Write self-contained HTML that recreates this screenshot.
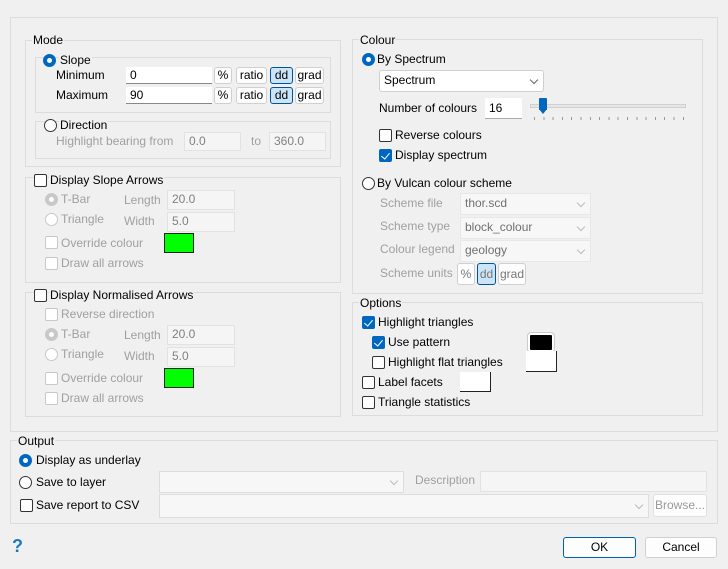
<!DOCTYPE html><html><head><style>
body{margin:0;width:728px;height:569px;background:#f0f0f0;font-family:"Liberation Sans",sans-serif;font-size:12px;color:#000;position:relative;overflow:hidden}
div,span{position:absolute;box-sizing:border-box}
.g{border:1px solid #dcdcdc}
.t{line-height:14px;white-space:nowrap;background:#f0f0f0;padding:0 1px}
.d{color:#a0a0a0}
.cb{width:13px;height:13px;border:1px solid #333;border-radius:2px;background:#fff}
.cb.dis{border-color:#c8c8c8}
.cb.on{background:#0067c0;border-color:#0067c0}
.cb.on:after{content:"";position:absolute;left:3px;top:1px;width:4px;height:7px;border:solid #fff;border-width:0 1.3px 1.3px 0;transform:rotate(40deg)}
.rb{width:13px;height:13px;border:1px solid #333;border-radius:50%;background:#fff}
.rb.on{background:#0067c0;border-color:#0067c0}
.rb.on:after{content:"";position:absolute;left:3px;top:3px;width:5px;height:5px;border-radius:50%;background:#fff}
.rb.dis{border-color:#c8c8c8}
.rb.dison{border:4px solid #c8c8c8}
.in{background:#fff;border-bottom:1px solid #888;line-height:16px;padding-left:4px}
.ind{background:#f5f5f5;border:1px solid #e2e2e2;color:#808080;line-height:17px;padding-left:4px}
.bt{background:#fdfdfd;border:1px solid #d0d0d0;border-radius:3px;text-align:center;line-height:15px}
.bt.sel{background:#cce4f7;border-color:#005499}
.cmb{background:#fff;border:1px solid #d0d0d0;border-radius:3px;line-height:19px;padding-left:4px}
.cmbd{background:#f7f7f7;border:1px solid #e8e8e8;color:#707070;line-height:19px;padding-left:4px}
.ar{right:6px;top:6px;width:6px;height:6px;border:solid #666;border-width:0 1px 1px 0;transform:rotate(45deg)}
.arl{border-color:#bbb}
</style></head><body>
<div class="g" style="left:10px;top:17px;width:708px;height:415px"></div>

<!-- Mode -->
<div class="g" style="left:25px;top:40px;width:316px;height:127px"></div>
<span class="t" style="left:32px;top:33px">Mode</span>
<div class="g" style="left:35px;top:57px;width:296px;height:56px"></div>
<div class="rb on" style="left:43px;top:54px"></div><span class="t" style="left:59px;top:53px">Slope</span>
<span class="t" style="left:55px;top:68px;background:none">Minimum</span>
<div class="in" style="left:126px;top:67px;width:86px;height:17px">0</div>
<div class="bt" style="left:214px;top:67px;width:18px;height:17px">%</div>
<div class="bt" style="left:236px;top:67px;width:31px;height:17px">ratio</div>
<div class="bt sel" style="left:270px;top:67px;width:23px;height:17px">dd</div>
<div class="bt" style="left:295px;top:67px;width:29px;height:17px">grad</div>
<span class="t" style="left:55px;top:88px;background:none">Maximum</span>
<div class="in" style="left:126px;top:87px;width:86px;height:17px">90</div>
<div class="bt" style="left:214px;top:87px;width:18px;height:17px">%</div>
<div class="bt" style="left:236px;top:87px;width:31px;height:17px">ratio</div>
<div class="bt sel" style="left:270px;top:87px;width:23px;height:17px">dd</div>
<div class="bt" style="left:295px;top:87px;width:29px;height:17px">grad</div>
<div class="g" style="left:35px;top:121px;width:296px;height:38px"></div>
<div class="rb" style="left:44px;top:119px"></div><span class="t" style="left:59px;top:118px">Direction</span>
<span class="t d" style="left:55px;top:134px;background:none">Highlight bearing from</span>
<div class="ind" style="left:184px;top:132px;width:57px;height:19px">0.0</div>
<span class="t d" style="left:250px;top:134px;background:none">to</span>
<div class="ind" style="left:269px;top:132px;width:57px;height:19px">360.0</div>

<!-- Slope arrows -->
<div class="g" style="left:25px;top:177px;width:316px;height:106px"></div>
<div class="cb" style="left:34px;top:174px"></div><span class="t" style="left:49px;top:173px">Display Slope Arrows</span>
<div class="rb dison" style="left:45px;top:193px"></div><span class="t d" style="left:60px;top:192px;background:none">T-Bar</span>
<span class="t d" style="left:123px;top:193px;background:none">Length</span>
<div class="ind" style="left:167px;top:190px;width:68px;height:20px">20.0</div>
<div class="rb dis" style="left:45px;top:213px"></div><span class="t d" style="left:60px;top:212px;background:none">Triangle</span>
<span class="t d" style="left:123px;top:214px;background:none">Width</span>
<div class="ind" style="left:167px;top:212px;width:68px;height:20px">5.0</div>
<div class="cb dis" style="left:45px;top:236px"></div><span class="t d" style="left:60px;top:236px;background:none">Override colour</span>
<div style="left:164px;top:233px;width:30px;height:20px;background:#00ff00;border:1px solid #222"></div>
<div class="cb dis" style="left:45px;top:257px"></div><span class="t d" style="left:60px;top:256px;background:none">Draw all arrows</span>

<!-- Normalised -->
<div class="g" style="left:25px;top:292px;width:316px;height:125px"></div>
<div class="cb" style="left:34px;top:289px"></div><span class="t" style="left:49px;top:288px">Display Normalised Arrows</span>
<div class="cb dis" style="left:45px;top:308px"></div><span class="t d" style="left:60px;top:307px;background:none">Reverse direction</span>
<div class="rb dison" style="left:45px;top:328px"></div><span class="t d" style="left:60px;top:327px;background:none">T-Bar</span>
<span class="t d" style="left:123px;top:328px;background:none">Length</span>
<div class="ind" style="left:167px;top:325px;width:68px;height:20px">20.0</div>
<div class="rb dis" style="left:45px;top:348px"></div><span class="t d" style="left:60px;top:347px;background:none">Triangle</span>
<span class="t d" style="left:123px;top:349px;background:none">Width</span>
<div class="ind" style="left:167px;top:347px;width:68px;height:20px">5.0</div>
<div class="cb dis" style="left:45px;top:372px"></div><span class="t d" style="left:60px;top:371px;background:none">Override colour</span>
<div style="left:164px;top:368px;width:30px;height:20px;background:#00ff00;border:1px solid #222"></div>
<div class="cb dis" style="left:45px;top:392px"></div><span class="t d" style="left:60px;top:391px;background:none">Draw all arrows</span>

<!-- Colour -->
<div class="g" style="left:352px;top:39px;width:351px;height:255px"></div>
<span class="t" style="left:359px;top:33px">Colour</span>
<div class="rb on" style="left:362px;top:53px"></div><span class="t" style="left:376px;top:52px;background:none">By Spectrum</span>
<div class="cmb" style="left:379px;top:70px;width:165px;height:22px">Spectrum<div class="ar"></div></div>
<span class="t" style="left:378px;top:101px;background:none">Number of colours</span>
<div class="in" style="left:485px;top:98px;width:37px;height:21px;line-height:20px;border-bottom-color:#aaa">16</div>
<div style="left:530px;top:104px;width:156px;height:4px;background:#e6e6e6;border:1px solid #d0d0d0"></div>
<div style="left:539px;top:98px;width:8px;height:12px;background:#0067c0;border-radius:1px 1px 0 0"></div>
<div style="left:539px;top:109px;width:0;height:0;border-left:4px solid transparent;border-right:4px solid transparent;border-top:5px solid #0067c0"></div>
<div style="left:534px;top:117px;width:152px;height:3px;background:repeating-linear-gradient(90deg,#999 0 1px,transparent 1px 9.3px)"></div>
<div class="cb" style="left:379px;top:129px"></div><span class="t" style="left:394px;top:128px;background:none">Reverse colours</span>
<div class="cb on" style="left:379px;top:149px"></div><span class="t" style="left:394px;top:148px;background:none">Display spectrum</span>
<div class="rb" style="left:362px;top:177px"></div><span class="t" style="left:376px;top:176px;background:none">By Vulcan colour scheme</span>
<span class="t d" style="left:379px;top:196px;background:none">Scheme file</span>
<div class="cmbd" style="left:460px;top:193px;width:131px;height:22px">thor.scd<div class="ar arl"></div></div>
<span class="t d" style="left:379px;top:219px;background:none">Scheme type</span>
<div class="cmbd" style="left:460px;top:217px;width:131px;height:22px">block_colour<div class="ar arl"></div></div>
<span class="t d" style="left:379px;top:242px;background:none">Colour legend</span>
<div class="cmbd" style="left:460px;top:240px;width:131px;height:22px">geology<div class="ar arl"></div></div>
<span class="t d" style="left:379px;top:266px;background:none">Scheme units</span>
<div class="bt" style="left:457px;top:263px;width:18px;height:22px;line-height:20px;color:#777">%</div>
<div class="bt sel" style="left:477px;top:263px;width:19px;height:22px;line-height:20px;color:#777">dd</div>
<div class="bt" style="left:498px;top:263px;width:28px;height:22px;line-height:20px;color:#777">grad</div>

<!-- Options -->
<div class="g" style="left:352px;top:302px;width:351px;height:114px"></div>
<span class="t" style="left:359px;top:296px">Options</span>
<div class="cb on" style="left:362px;top:316px"></div><span class="t" style="left:377px;top:315px;background:none">Highlight triangles</span>
<div class="cb on" style="left:372px;top:336px"></div><span class="t" style="left:387px;top:335px;background:none">Use pattern</span>
<div style="left:528px;top:333px;width:26px;height:19px;background:#000;border:2px solid #fff;outline:1px solid #ccc;border-radius:3px"></div>
<div class="cb" style="left:372px;top:356px"></div><span class="t" style="left:387px;top:355px;background:none">Highlight flat triangles</span>
<div style="left:526px;top:351px;width:31px;height:21px;background:#fff;border-right:1px solid #222;border-bottom:1px solid #222"></div>
<div class="cb" style="left:362px;top:376px"></div><span class="t" style="left:377px;top:375px;background:none">Label facets</span>
<div style="left:460px;top:372px;width:31px;height:20px;background:#fff;border-right:1px solid #222;border-bottom:1px solid #222"></div>
<div class="cb" style="left:362px;top:396px"></div><span class="t" style="left:377px;top:395px;background:none">Triangle statistics</span>

<!-- Output -->
<div class="g" style="left:10px;top:440px;width:708px;height:84px"></div>
<span class="t" style="left:17px;top:434px">Output</span>
<div class="rb on" style="left:19px;top:454px"></div><span class="t" style="left:35px;top:453px;background:none">Display as underlay</span>
<div class="rb" style="left:19px;top:476px"></div><span class="t" style="left:35px;top:475px;background:none">Save to layer</span>
<div class="cmbd" style="left:159px;top:471px;width:245px;height:22px;border-color:#ddd"><div class="ar arl"></div></div>
<span class="t d" style="left:414px;top:473px;background:none">Description</span>
<div class="ind" style="left:480px;top:471px;width:227px;height:21px"></div>
<div class="cb" style="left:20px;top:499px"></div><span class="t" style="left:35px;top:498px;background:none">Save report to CSV</span>
<div class="cmbd" style="left:159px;top:494px;width:490px;height:24px;border-color:#ddd"><div class="ar arl" style="top:7px"></div></div>
<div class="bt" style="left:653px;top:494px;width:54px;height:23px;line-height:21px;color:#999;border-color:#e0e0e0">Browse...</div>

<span style="left:12px;top:536px;font-size:18px;font-weight:bold;color:#1e78c8;line-height:20px">?</span>
<div class="bt" style="left:563px;top:537px;width:73px;height:21px;line-height:19px;border-color:#005fb8;background:#fdfdfd">OK</div>
<div class="bt" style="left:645px;top:537px;width:72px;height:21px;line-height:19px">Cancel</div>
</body></html>
